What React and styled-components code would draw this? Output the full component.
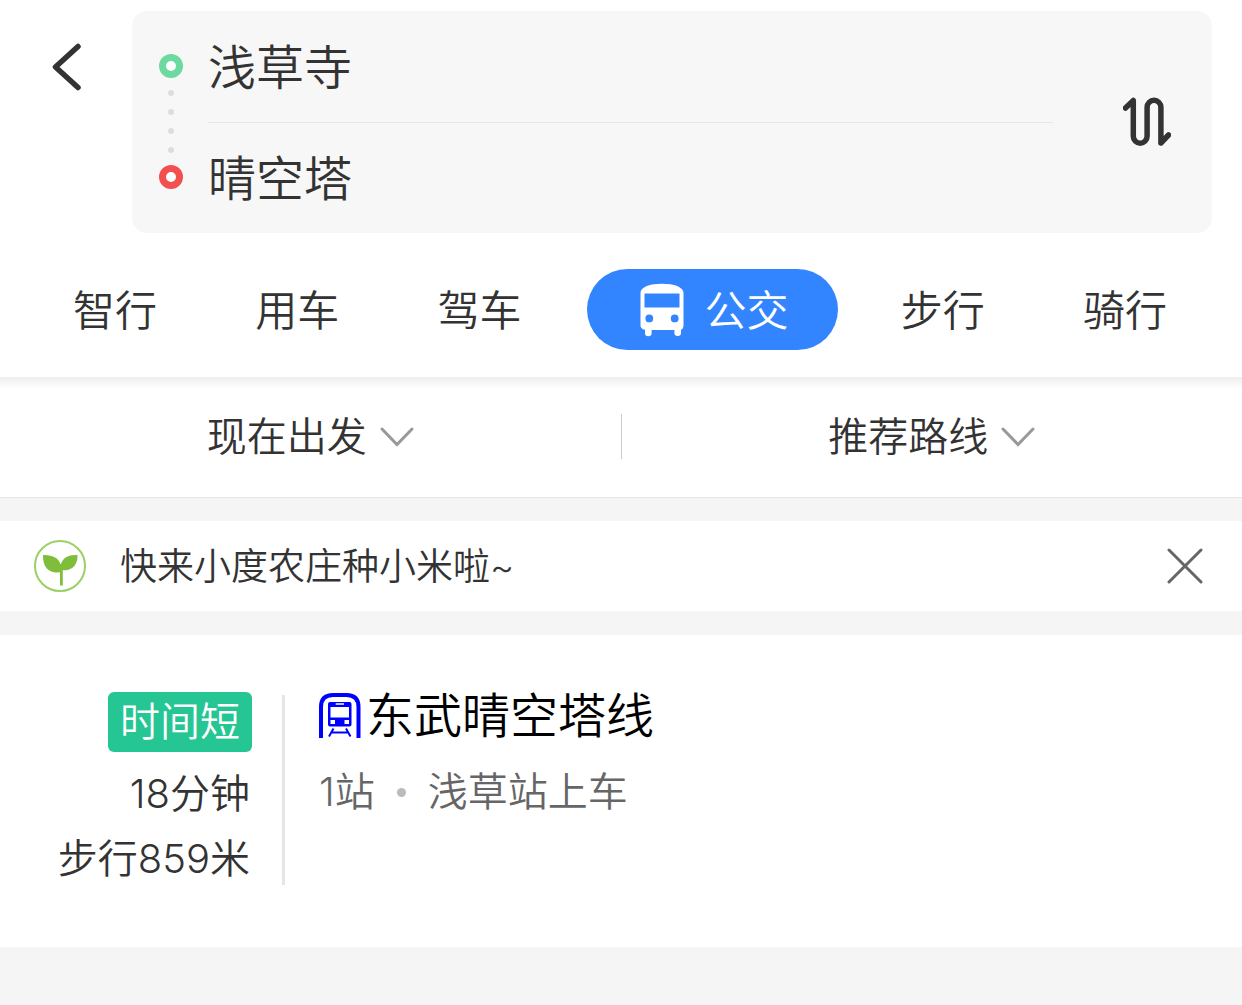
import React, { useState } from "react";
import styled, { createGlobalStyle, css } from "styled-components";

const GlobalStyle = createGlobalStyle`
  * {
    box-sizing: border-box;
  }
  body {
    margin: 0;
    background: #f5f5f5;
    color: #333;
    font-family: Inter, "Noto Sans CJK SC", sans-serif;
    font-weight: 350;
  }
  button, input, select {
    margin: 0;
    padding: 0;
    border: 0;
    background: none;
    color: inherit;
    font: inherit;
  }
  button, select {
    cursor: pointer;
  }
  svg {
    display: block;
    flex: none;
  }
`;

const modes = ["智行", "用车", "驾车", "公交", "步行", "骑行"];

const App = () => {
  const [start, setStart] = useState("浅草寺");
  const [end, setEnd] = useState("晴空塔");
  const [mode, setMode] = useState("公交");
  const [showBanner, setShowBanner] = useState(true);

  const swap = () => {
    setStart(end);
    setEnd(start);
  };

  return (
    <>
      <GlobalStyle />
      <Header>
        <SearchRow>
          <BackButton aria-label="返回">
            <BackIcon />
          </BackButton>
          <SearchCard>
            <Rail>
              <Ring color="#6cd9a0" />
              <Dots>
                <i />
                <i />
                <i />
                <i />
              </Dots>
              <Ring color="#f25050" />
            </Rail>
            <Fields>
              <Field
                aria-label="起点"
                value={start}
                onChange={(e) => setStart(e.target.value)}
              />
              <Field
                aria-label="终点"
                value={end}
                onChange={(e) => setEnd(e.target.value)}
              />
            </Fields>
            <SwapButton aria-label="交换起点和终点" onClick={swap}>
              <SwapIcon />
            </SwapButton>
          </SearchCard>
        </SearchRow>
        <Tabs>
          {modes.map((name) => (
            <Tab
              key={name}
              $active={name === mode}
              aria-pressed={name === mode}
              onClick={() => setMode(name)}
            >
              {name === mode && <BusIcon />}
              <TabName>{name}</TabName>
            </Tab>
          ))}
        </Tabs>
      </Header>
      <Filters>
        <Filter>
          <Select aria-label="出发时间">
            <option>现在出发</option>
          </Select>
          <ChevronIcon />
        </Filter>
        <Filter>
          <Select aria-label="路线偏好">
            <option>推荐路线</option>
          </Select>
          <ChevronIcon />
        </Filter>
      </Filters>
      <Main>
        {showBanner && (
          <Banner>
            <SproutIcon />
            <BannerText>快来小度农庄种小米啦~</BannerText>
            <CloseButton aria-label="关闭" onClick={() => setShowBanner(false)}>
              <CloseIcon />
            </CloseButton>
          </Banner>
        )}
        <RouteCard>
          <Summary>
            <Badge>时间短</Badge>
            <p>18分钟</p>
            <p>步行859米</p>
          </Summary>
          <Rule />
          <Line>
            <LineName>
              <MetroIcon />
              东武晴空塔线
            </LineName>
            <LineInfo>
              <span>1站</span>
              <Bullet />
              <span>浅草站上车</span>
            </LineInfo>
          </Line>
        </RouteCard>
      </Main>
    </>
  );
};

const BackIcon = () => (
  <svg width="30" height="50" viewBox="0 0 30 50" fill="none">
    <path
      d="M27 4.500 4.500 25l22.500 20.500"
      stroke="#333"
      strokeWidth="5.500"
      strokeLinecap="round"
      strokeLinejoin="round"
    />
  </svg>
);

const SwapIcon = () => (
  <svg width="48" height="50" viewBox="0 0 48 50" fill="none">
    <path
      d="M2.500 11 10.300 3.500V39.300a6.900 6.900 0 0 0 13.800 0V10.200a6.900 6.900 0 0 1 13.800 0V46L45.500 38"
      stroke="#333"
      strokeWidth="5.500"
      strokeLinecap="round"
      strokeLinejoin="round"
    />
  </svg>
);

const BusIcon = () => (
  <svg width="44" height="54" viewBox="0 0 44 54">
    <path
      fill="#fff"
      fillRule="evenodd"
      d="M.5 10C.5 4 10 .8 22 .8s21.500 3.200 21.500 9.200v32.500c0 2.500-1 3.500-2.500 4.300v3a3.300 3.300 0 0 1-6.600 0V47H11.600v3a3.300 3.300 0 0 1-6.600 0v-3.200C2 46 .5 45 .5 42.500zM4.500 10.500v14h35v-14zM9.300 31.500a3.900 3.900 0 1 0 0 7.800 3.900 3.900 0 0 0 0-7.800zM34.700 31.500a3.900 3.900 0 1 0 0 7.800 3.900 3.900 0 0 0 0-7.800z"
    />
  </svg>
);

const ChevronIcon = () => (
  <svg width="34" height="20" viewBox="0 0 34 20" fill="none">
    <path
      d="M2 2l15 15.500L32 2"
      stroke="#999"
      strokeWidth="3"
      strokeLinecap="round"
    />
  </svg>
);

const SproutIcon = () => (
  <svg width="52" height="52" viewBox="0 0 52 52">
    <circle cx="26" cy="26" r="25" fill="none" stroke="#9bd067" strokeWidth="2" />
    <path
      fill="#7fbe3a"
      d="M9 15c9-.5 16 3 17.700 9.500C29 17 35 14.500 43.500 15c.5 9-4.500 14.500-11.500 15.200-1.500.1-2.500 0-3.200-.2V45.500H26V32.300C17 34 8.500 29 9 15z"
    />
  </svg>
);

const CloseIcon = () => (
  <svg width="36" height="36" viewBox="0 0 36 36" fill="none">
    <path
      d="M2 2l32 32M34 2L2 34"
      stroke="#666"
      strokeWidth="3"
      strokeLinecap="round"
    />
  </svg>
);

const MetroIcon = () => (
  <svg width="42" height="46" viewBox="0 0 42 46" fill="none">
    <path d="M2 45V14Q2 2 14 2h13.500Q39.500 2 39.500 14v31" stroke="#00f" strokeWidth="4" />
    <path
      fill="#00f"
      fillRule="evenodd"
      d="M11 9h19.500a2 2 0 0 1 2 2v20.500a2 2 0 0 1-2 2H11a2 2 0 0 1-2-2V11a2 2 0 0 1 2-2zM16.700 10.300v1.500h8.300v-1.500zM11.500 14v10.500h18.500V14zM11.500 27v4h4.500v-4zM25.500 27v4H30v-4z"
    />
    <path d="M14.500 35.500l-4.500 8M27 35.500l4.500 8M13 39.500h15.500" stroke="#00f" strokeWidth="2" />
  </svg>
);

const Header = styled.header`
  padding-top: 11px;
  background: #fff;
`;

const SearchRow = styled.div`
  display: flex;
  align-items: flex-start;
  padding-right: 30px;
`;

const BackButton = styled.button`
  display: flex;
  justify-content: center;
  align-items: center;
  width: 132px;
  height: 111px;
`;

const SearchCard = styled.div`
  display: flex;
  flex: 1;
  border-radius: 15px;
  background: #f7f7f7;
`;

const Rail = styled.div`
  display: flex;
  flex-direction: column;
  justify-content: center;
  align-items: center;
  gap: 12px;
  width: 76px;
  padding: 0 0 1px 2px;
`;

const Ring = styled.span`
  width: 24px;
  height: 24px;
  border: 7px solid ${({ color }) => color};
  border-radius: 50%;
  background: #fff;
`;

const Dots = styled.div`
  display: flex;
  flex-direction: column;
  gap: 13px;
  i {
    width: 6px;
    height: 6px;
    border-radius: 50%;
    background: #ddd;
  }
`;

const Fields = styled.div`
  flex: 1;
`;

const Field = styled.input`
  display: block;
  width: 100%;
  height: 111px;
  padding-bottom: 6px;
  font-size: 48px;
  outline: none;
  & + & {
    border-top: 1px solid #e6e6e6;
  }
`;

const SwapButton = styled.button`
  display: flex;
  justify-content: center;
  align-items: center;
  width: 159px;
  padding-left: 28px;
`;

const Tabs = styled.nav`
  display: flex;
  padding: 36px 26px 27px 24px;
`;

const Tab = styled.button`
  display: flex;
  flex: 1;
  justify-content: center;
  align-items: center;
  gap: 21px;
  height: 81px;
  font-size: 42px;
  ${({ $active }) =>
    $active &&
    css`
      flex: none;
      width: 251px;
      margin: 0 14px 0 16px;
      padding-left: 4px;
      border-radius: 41px;
      background: #3385ff;
      color: #fff;
    `}
`;

const TabName = styled.span`
  padding-bottom: 5px;
`;

const Filters = styled.div`
  display: flex;
  align-items: center;
  height: 121px;
  padding-bottom: 1px;
  border-bottom: 1px solid #e6e6e6;
  background: linear-gradient(#eeeef0, #fff 12px);
`;

const Filter = styled.div`
  display: flex;
  flex: 1;
  justify-content: center;
  align-items: center;
  gap: 13px;
  height: 45px;
  & + & {
    border-left: 1px solid #ccc;
  }
`;

const Select = styled.select`
  appearance: none;
  font-size: 40px;
  line-height: 60px;
`;

const Main = styled.main`
  display: flex;
  flex-direction: column;
  gap: 24px;
  padding-top: 23px;
`;

const Banner = styled.section`
  display: flex;
  align-items: center;
  height: 90px;
  padding: 0 39px 0 34px;
  background: #fff;
`;

const BannerText = styled.p`
  flex: 1;
  margin: 0 0 0 34px;
  padding-bottom: 4px;
  font-size: 37px;
`;

const CloseButton = styled.button`
  display: flex;
`;

const RouteCard = styled.article`
  display: flex;
  padding: 57px 0 56px;
  background: #fff;
`;

const Summary = styled.div`
  display: flex;
  flex-direction: column;
  align-items: flex-end;
  width: 252px;
  font-size: 40px;
  line-height: 65px;
  p {
    margin: 0;
    padding-right: 2px;
  }
`;

const Badge = styled.span`
  margin-bottom: 9px;
  padding: 0 12px;
  border-radius: 6px;
  background: #26c694;
  color: #fff;
  line-height: 60px;
`;

const Rule = styled.div`
  width: 3px;
  margin: 3px 34px 6px 30px;
  background: #e6e6e6;
`;

const Line = styled.div`
  flex: 1;
`;

const LineName = styled.h2`
  display: flex;
  align-items: center;
  gap: 5px;
  margin: 0 0 22px;
  color: #000;
  font-size: 48px;
  font-weight: inherit;
  line-height: 48px;
`;

const LineInfo = styled.p`
  display: flex;
  align-items: center;
  margin: 0;
  color: #666;
  font-size: 40px;
  line-height: 60px;
`;

const Bullet = styled.i`
  width: 9px;
  height: 9px;
  margin: 0 22px;
  border-radius: 50%;
  background: #bbb;
`;

export default App;
